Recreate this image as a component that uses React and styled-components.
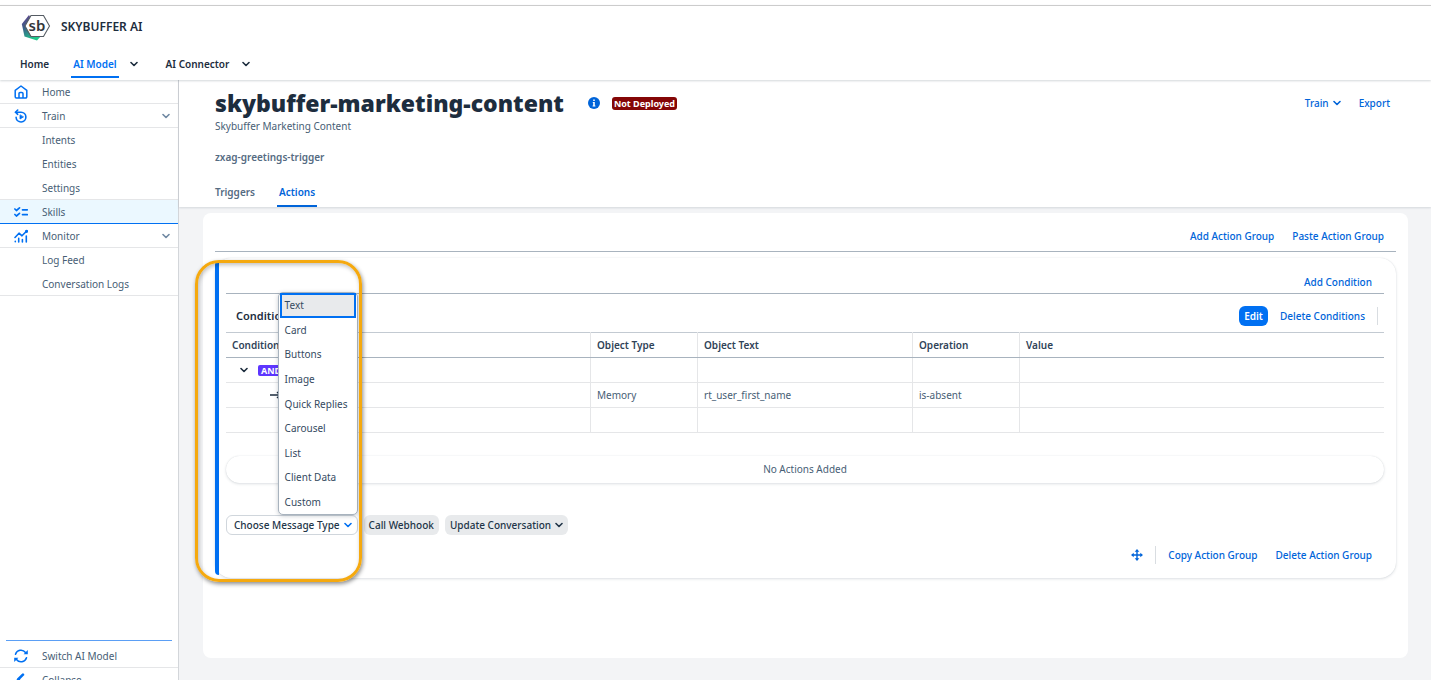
import styled, { createGlobalStyle, css } from "styled-components";

const menuItems = ["Text", "Card", "Buttons", "Image", "Quick Replies", "Carousel", "List", "Client Data", "Custom"];

function Chevron({ size = 8 }) {
    return (
        <svg width={size} height={size} viewBox="0 0 8 8" fill="none" stroke="currentColor" strokeWidth="1.6" strokeLinecap="round" strokeLinejoin="round" aria-hidden="true">
            <path d="M1 2.5 4 5.5 7 2.5" />
        </svg>
    );
}

function Logo() {
    return (
        <svg width="30" height="28" viewBox="0 0 30 28" role="img" aria-label="Skybuffer">
            <defs>
                <linearGradient id="logoFill" x1="0" y1="0" x2="0.5" y2="1">
                    <stop offset="0" stopColor="#6b3f8e" />
                    <stop offset="0.45" stopColor="#3b5f88" />
                    <stop offset="1" stopColor="#1fc98b" />
                </linearGradient>
            </defs>
            <path d="M8 2 .8 11 3.5 23.5 16 27.5 20 23z" fill="url(#logoFill)" />
            <path d="M10 2.5H22.5L28.5 13 22.5 23.5H10L4 13z" fill="#fff" stroke="#555c63" strokeWidth="1.1" />
            <text x="16" y="18" textAnchor="middle" fontFamily="Noto Sans, sans-serif" fontSize="15" fontWeight="600" fill="#32363a">sb</text>
        </svg>
    );
}

function HomeIcon() {
    return (
        <svg width="14" height="14" viewBox="0 0 14 14" fill="none" stroke="currentColor" strokeWidth="1.5" strokeLinejoin="round" aria-hidden="true">
            <path d="M1.2 5.4 7 1l5.8 4.4v6.400a1.2 1.2 0 0 1-1.2 1.2H2.400a1.2 1.2 0 0 1-1.2-1.2z" />
            <path d="M5 13V8.600A1.1 1.1 0 0 1 6.1 7.5h1.8A1.1 1.1 0 0 1 9 8.600V13" />
        </svg>
    );
}

function TrainIcon() {
    return (
        <svg width="14" height="14" viewBox="0 0 14 14" fill="none" stroke="currentColor" strokeWidth="1.6" strokeLinecap="round" strokeLinejoin="round" aria-hidden="true">
            <path d="M1.5 3.2h5.500a4.900 4.900 0 1 1-4.900 5.2" />
            <path d="M3.7 1 1.5 3.2l2.2 2.1" />
            <path d="M6 6.2v3.8L9.2 8.1z" fill="currentColor" strokeWidth="0.8" />
        </svg>
    );
}

function SkillsIcon() {
    return (
        <svg width="14" height="14" viewBox="0 0 14 14" fill="none" stroke="currentColor" strokeWidth="1.7" strokeLinecap="round" strokeLinejoin="round" aria-hidden="true">
            <path d="M.9 4l1.5 1.5L5.5 2.8M.9 9.5 2.4 11l3.1-2.7M8.5 4.8h4.8M8.5 9.6h4.8" />
        </svg>
    );
}

function MonitorIcon() {
    return (
        <svg width="14" height="14" viewBox="0 0 14 14" fill="none" stroke="currentColor" strokeWidth="1.6" strokeLinecap="round" strokeLinejoin="round" aria-hidden="true">
            <path d="M1 8.5 5 4.2l3 2.6L12.7 2" />
            <path d="M1.3 12.2v.6M4.7 9.4V13M8.4 10.5V13M12.3 7V13" />
            <circle cx="12.5" cy="2.3" r="0.8" fill="currentColor" />
        </svg>
    );
}

function SwitchIcon() {
    return (
        <svg width="14" height="14" viewBox="0 0 14 14" fill="none" stroke="currentColor" strokeWidth="1.5" strokeLinecap="round" aria-hidden="true">
            <path d="M1.5 5.2A5.7 5.7 0 0 1 11.5 3.5M12.5 8.8A5.7 5.7 0 0 1 2.5 10.5" />
            <path d="M13.8 1v4.2H9.6zM.2 13V8.8h4.2z" fill="currentColor" stroke="none" />
        </svg>
    );
}

function MoveIcon() {
    return (
        <svg width="12" height="12" viewBox="0 0 12 12" fill="none" stroke="currentColor" strokeWidth="1.4" aria-hidden="true">
            <path d="M6 1.5v9M1.5 6h9" />
            <path d="M6 0l2.3 2.7H3.7zM6 12 3.7 9.3h4.6zM0 6l2.7-2.3v4.6zM12 6 9.3 8.3V3.7z" fill="currentColor" stroke="none" />
        </svg>
    );
}

function InfoIcon() {
    return (
        <svg width="12" height="12" viewBox="0 0 12 12" role="img" aria-label="Information">
            <circle cx="6" cy="6" r="6" fill="#0064d9" />
            <path d="M5.2 2.4h1.6V4H5.2zM4.8 5h2v3.4h.6v1H4.6v-1h.6V6h-.4z" fill="#fff" />
        </svg>
    );
}

function App() {
    return (
        <Viewport>
            <GlobalStyle />
            <Header>
                <Brand>
                    <Logo />
                    <BrandName>SKYBUFFER AI</BrandName>
                </Brand>
                <TopNav>
                    <TopLink href="#home">Home</TopLink>
                    <TopGroup>
                        <TopLink href="#model" $active>AI Model</TopLink>
                        <IconButton aria-label="Open AI Model menu"><Chevron /></IconButton>
                    </TopGroup>
                    <TopGroup>
                        <TopLink href="#connector">AI Connector</TopLink>
                        <IconButton aria-label="Open AI Connector menu"><Chevron /></IconButton>
                    </TopGroup>
                </TopNav>
            </Header>
            <Body>
                <Sidebar>
                    <nav aria-label="Model">
                        <SideLink href="#" $line><SideIcon><HomeIcon /></SideIcon>Home</SideLink>
                        <SideLink href="#" $line><SideIcon><TrainIcon /></SideIcon>Train<SideChevron><Chevron /></SideChevron></SideLink>
                        <SideLink href="#"><SideIcon />Intents</SideLink>
                        <SideLink href="#"><SideIcon />Entities</SideLink>
                        <SideLink href="#" $line><SideIcon />Settings</SideLink>
                        <SideLink href="#" $selected><SideIcon><SkillsIcon /></SideIcon>Skills</SideLink>
                        <SideLink href="#" $line><SideIcon><MonitorIcon /></SideIcon>Monitor<SideChevron><Chevron /></SideChevron></SideLink>
                        <SideLink href="#"><SideIcon />Log Feed</SideLink>
                        <SideLink href="#" $line><SideIcon />Conversation Logs</SideLink>
                    </nav>
                    <SideFooter>
                        <SideLink href="#" $line><SideIcon><SwitchIcon /></SideIcon>Switch AI Model</SideLink>
                        <SideLink href="#"><SideIcon><CollapseMark><Chevron size={13} /></CollapseMark></SideIcon>Collapse</SideLink>
                    </SideFooter>
                </Sidebar>
                <Main>
                    <PageHead>
                        <TitleRow>
                            <Title>skybuffer-marketing-content</Title>
                            <InfoIcon />
                            <Badge>Not Deployed</Badge>
                            <HeadActions>
                                <LinkButton>Train <Chevron /></LinkButton>
                                <LinkButton>Export</LinkButton>
                            </HeadActions>
                        </TitleRow>
                        <Subtitle>Skybuffer Marketing Content</Subtitle>
                        <Trigger>zxag-greetings-trigger</Trigger>
                        <Tabs role="tablist">
                            <Tab role="tab" aria-selected="false">Triggers</Tab>
                            <Tab role="tab" aria-selected="true" $active>Actions</Tab>
                        </Tabs>
                    </PageHead>
                    <Panel>
                        <PanelBar>
                            <LinkButton>Add Action Group</LinkButton>
                            <LinkButton>Paste Action Group</LinkButton>
                        </PanelBar>
                        <Group>
                            <Highlight />
                            <Accent />
                            <GroupBody>
                                <ConditionBar>
                                    <LinkButton>Add Condition</LinkButton>
                                </ConditionBar>
                                <TableBar>
                                    <TableTitle>Conditions</TableTitle>
                                    <EditButton>Edit</EditButton>
                                    <LinkButton>Delete Conditions</LinkButton>
                                    <Divider />
                                </TableBar>
                                <Table>
                                    <colgroup>
                                        <Col />
                                        <Col $width={107} />
                                        <Col $width={215} />
                                        <Col $width={107} />
                                        <Col />
                                    </colgroup>
                                    <thead>
                                        <tr>
                                            <Th>Condition</Th>
                                            <Th>Object Type</Th>
                                            <Th>Object Text</Th>
                                            <Th>Operation</Th>
                                            <Th>Value</Th>
                                        </tr>
                                    </thead>
                                    <tbody>
                                        <tr>
                                            <Td>
                                                <Tree>
                                                    <Chevron />
                                                    <AndTag>AND</AndTag>
                                                </Tree>
                                            </Td>
                                            <Td /><Td /><Td /><Td />
                                        </tr>
                                        <tr>
                                            <Td>
                                                <Tree $deep>
                                                    <svg width="12" height="8" viewBox="0 0 12 8" fill="none" stroke="currentColor" strokeWidth="1.3" aria-hidden="true">
                                                        <path d="M0 4h10M7 1l3 3-3 3" />
                                                    </svg>
                                                </Tree>
                                            </Td>
                                            <Td>Memory</Td>
                                            <Td>rt_user_first_name</Td>
                                            <Td>is-absent</Td>
                                            <Td />
                                        </tr>
                                        <tr><Td /><Td /><Td /><Td /><Td /></tr>
                                    </tbody>
                                </Table>
                                <EmptyNote>No Actions Added</EmptyNote>
                                <AddRow>
                                    <MenuAnchor>
                                        <ActionButton $outlined aria-haspopup="menu" aria-expanded="true">Choose Message Type <Chevron /></ActionButton>
                                        <Menu role="menu">
                                            {menuItems.map((item, i) => (
                                                <MenuItem key={item} role="menuitem" $focused={i === 0}>{item}</MenuItem>
                                            ))}
                                        </Menu>
                                    </MenuAnchor>
                                    <ActionButton>Call Webhook</ActionButton>
                                    <ActionButton>Update Conversation <Chevron /></ActionButton>
                                </AddRow>
                                <GroupBar>
                                    <IconButton $blue aria-label="Move action group"><MoveIcon /></IconButton>
                                    <Divider />
                                    <LinkButton>Copy Action Group</LinkButton>
                                    <LinkButton>Delete Action Group</LinkButton>
                                </GroupBar>
                            </GroupBody>
                        </Group>
                    </Panel>
                </Main>
            </Body>
        </Viewport>
    );
}

const GlobalStyle = createGlobalStyle`
    * {
        box-sizing: border-box;
    }
    body {
        margin: 0;
        background: #fff;
        color: #475e75;
        font-family: "Noto Sans", sans-serif;
        font-size: 10px;
        line-height: 16px;
    }
    button {
        font: inherit;
        border: 0;
        padding: 0;
        background: none;
        cursor: pointer;
        white-space: nowrap;
    }
    a {
        color: inherit;
        text-decoration: none;
    }
    svg {
        flex-shrink: 0;
    }
`

const Viewport = styled.div`
    display: flex;
    flex-direction: column;
    height: 100vh;
    overflow: hidden;
`

const Header = styled.header`
    display: flex;
    flex-direction: column;
    flex-shrink: 0;
    margin-top: 5px;
    border-top: 1px solid #ccc;
    background: #fff;
    box-shadow: 0 1px 2px rgba(34, 53, 72, 0.2);
    z-index: 1;
`

const Brand = styled.div`
    display: flex;
    align-items: center;
    gap: 10px;
    height: 42px;
    padding-left: 21px;
`

const BrandName = styled.span`
    color: #1d2d3e;
    font-size: 12px;
    font-weight: 600;
`

const TopGroup = styled.div`
    display: flex;
    gap: 13px;
`

const TopNav = styled.nav`
    display: flex;
    gap: 24px;
    height: 32px;
    padding-left: 20px;
    color: #1d2d3e;
    ${TopGroup} + ${TopGroup} {
        margin-left: 4px;
    }
`

const TopLink = styled.a`
    display: flex;
    align-items: center;
    height: 30px;
    padding: 4px 2px 0;
    margin: 0 -2px;
    font-weight: 600;
    border-bottom: 2px solid transparent;
    ${({ $active }) => $active && css`
        color: #0070f2;
        border-color: #0070f2;
    `}
`

const IconButton = styled.button`
    display: flex;
    align-items: center;
    color: ${({ $blue }) => ($blue ? "#0064d9" : "#1d2d3e")};
`

const Body = styled.div`
    display: flex;
    flex: 1;
    min-height: 0;
`

const Sidebar = styled.aside`
    display: flex;
    flex-direction: column;
    flex-shrink: 0;
    width: 179px;
    border-right: 1px solid #d3d6da;
    background: #fff;
`

const SideLink = styled.a`
    display: flex;
    align-items: center;
    height: 24px;
    padding: 0 8px 0 14px;
    border-bottom: 1px solid ${({ $line }) => ($line ? "#e5e6e8" : "transparent")};
    ${({ $selected }) => $selected && css`
        background: #ebf8ff;
        border-color: #0070f2;
    `}
`

const SideIcon = styled.span`
    display: flex;
    width: 28px;
    color: #0070f2;
`

const SideChevron = styled.span`
    display: flex;
    margin-left: auto;
    color: #7089a3;
`

const SideFooter = styled.div`
    margin-top: auto;
    margin-bottom: -12px;
    &::before {
        content: "";
        display: block;
        height: 1px;
        margin: 0 6px 3px;
        background: #5b9ff5;
    }
`

const CollapseMark = styled.span`
    display: flex;
    transform: rotate(90deg);
`

const Main = styled.main`
    display: flex;
    flex-direction: column;
    flex: 1;
    min-width: 0;
    background: #f3f4f6;
`

const PageHead = styled.section`
    display: flex;
    flex-direction: column;
    height: 127px;
    padding: 8px 41px 0 36px;
    background: #fff;
    box-shadow: 0 1px 2px rgba(34, 53, 72, 0.15);
`

const TitleRow = styled.div`
    display: flex;
    align-items: center;
    height: 30px;
`

const Title = styled.h1`
    margin: 0 24px 0 0;
    color: #1d2d3e;
    font-size: 23px;
    font-weight: 900;
    line-height: 30px;
`

const Badge = styled.span`
    margin-left: 12px;
    padding: 0 2px;
    border-radius: 3px;
    background: #840606;
    color: #fff;
    font-size: 9px;
    font-weight: 700;
    line-height: 13px;
`

const HeadActions = styled.div`
    display: flex;
    gap: 18px;
    margin-left: auto;
`

const LinkButton = styled.button`
    display: flex;
    align-items: center;
    gap: 4px;
    color: #0064d9;
    font-weight: 500;
`

const Subtitle = styled.p`
    margin: 0;
`

const Trigger = styled.p`
    margin: 15px 0 0;
    color: #556b82;
    font-weight: 600;
`

const Tabs = styled.div`
    display: flex;
    gap: 20px;
    margin: auto 0 0 -2px;
`

const Tab = styled.button`
    height: 31px;
    padding: 2px 2px 0;
    font-weight: 600;
    color: ${({ $active }) => ($active ? "#0064d9" : "#556b82")};
    border-bottom: 2px solid ${({ $active }) => ($active ? "#0064d9" : "transparent")};
`

const Panel = styled.section`
    flex: 1;
    margin: 6px 23px 22px 24px;
    padding: 0 12px;
    border-radius: 8px;
    background: #fff;
`

const PanelBar = styled.div`
    display: flex;
    align-items: center;
    justify-content: flex-end;
    gap: 18px;
    height: 39px;
    padding: 8px 12px 0 0;
    border-bottom: 1px solid #a8b3be;
`

const Group = styled.div`
    position: relative;
    display: flex;
    margin-top: 6px;
    border-radius: 16px;
    background: #fff;
    box-shadow: 0 0 1px rgba(34, 53, 72, 0.15), 0 1px 3px rgba(34, 53, 72, 0.15);
`

const Highlight = styled.div`
    position: absolute;
    left: -20px;
    top: 2px;
    z-index: 3;
    width: 167px;
    height: 322px;
    border: 3px solid #f5a90f;
    border-radius: 24px;
    box-shadow: 1px 2px 4px rgba(0, 0, 0, 0.45), inset 1px 2px 4px rgba(0, 0, 0, 0.25);
    pointer-events: none;
`

const Accent = styled.div`
    width: 4px;
    margin: 3px 0;
    border-radius: 4px 0 0 4px;
    background: #0070f2;
`

const GroupBody = styled.div`
    flex: 1;
    min-width: 0;
    padding: 0 12px 0 7px;
`

const ConditionBar = styled.div`
    display: flex;
    align-items: center;
    justify-content: flex-end;
    height: 36px;
    padding: 12px 12px 0 0;
    border-bottom: 1px solid #a8b3be;
`

const TableBar = styled.div`
    display: flex;
    align-items: center;
    gap: 12px;
    height: 38px;
    padding: 6px 6px 0 10px;
`

const TableTitle = styled.h2`
    margin: 0 auto 0 0;
    color: #1d2d3e;
    font-size: 11px;
    font-weight: 600;
`

const EditButton = styled.button`
    height: 20px;
    padding: 0 5px;
    border-radius: 6px;
    background: #0070f2;
    color: #fff;
    font-weight: 600;
`

const Divider = styled.span`
    width: 1px;
    height: 18px;
    background: #d9dde1;
`

const Table = styled.table`
    width: 100%;
    table-layout: fixed;
    border-collapse: collapse;
    border-top: 1px solid #c3cad2;
    border-bottom: 1px solid #c3cad2;
`

const Col = styled.col`
    width: ${({ $width }) => ($width ? `${$width}px` : "auto")};
`

const cell = css`
    height: 25px;
    padding: 0 6px;
    text-align: left;
    border-right: 1px solid #e5e6e8;
    &:last-child {
        border-right: 0;
    }
`

const Th = styled.th`
    ${cell}
    color: #2f4358;
    font-weight: 600;
    border-bottom: 1px solid #a8b3be;
`

const Td = styled.td`
    ${cell}
    border-bottom: 1px solid #e5e6e8;
`

const Tree = styled.div`
    display: flex;
    align-items: center;
    gap: 10px;
    padding-left: ${({ $deep }) => ($deep ? "38px" : "8px")};
    color: #1d2d3e;
`

const AndTag = styled.span`
    padding: 0 3px;
    border-radius: 2px;
    background: #5d36ff;
    color: #fff;
    font-size: 9px;
    font-weight: 700;
    line-height: 11px;
`

const EmptyNote = styled.div`
    margin-top: 23px;
    border-radius: 14px;
    line-height: 27px;
    text-align: center;
    box-shadow: 0 0 1px rgba(34, 53, 72, 0.15), 0 1px 3px rgba(34, 53, 72, 0.15);
`

const AddRow = styled.div`
    display: flex;
    gap: 6px;
    margin-top: 32px;
`

const MenuAnchor = styled.div`
    position: relative;
`

const ActionButton = styled.button`
    display: flex;
    align-items: center;
    gap: 4px;
    height: 20px;
    padding: 0 5px;
    border-radius: 6px;
    color: #223548;
    background: #e8eaec;
    font-weight: 500;
    ${({ $outlined }) => $outlined && css`
        padding: 0 5px 0 7px;
        border: 1px solid #d0d6dc;
        background: #fff;
        svg {
            color: #0070f2;
        }
    `}
`

const Menu = styled.div`
    position: absolute;
    right: 0;
    bottom: 100%;
    z-index: 2;
    display: flex;
    flex-direction: column;
    width: 80px;
    height: 223px;
    padding: 0 1px;
    border: 1px solid #a8b3be;
    border-radius: 5px;
    background: #fff;
    box-shadow: 0 1px 4px rgba(34, 53, 72, 0.25);
`

const MenuItem = styled.button`
    flex: 1;
    padding: 0 3px;
    border: 2px solid ${({ $focused }) => ($focused ? "#0070f2" : "transparent")};
    background: ${({ $focused }) => ($focused ? "#e8eaec" : "none")};
    color: #354a5f;
    text-align: left;
`

const GroupBar = styled.div`
    display: flex;
    align-items: center;
    justify-content: flex-end;
    gap: 12px;
    height: 43px;
    padding: 0 12px 4px 0;
    ${LinkButton} + ${LinkButton} {
        margin-left: 6px;
    }
`

export default App;
